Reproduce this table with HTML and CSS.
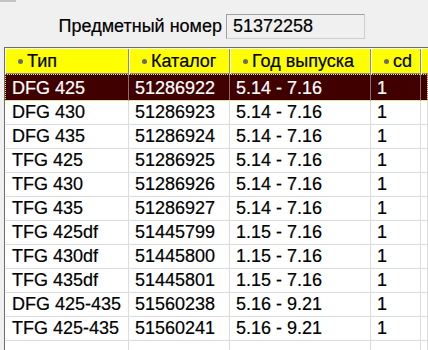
FILE: index.html
```html
<!DOCTYPE html>
<html lang="ru">
<head>
<meta charset="utf-8">
<title>Предметный номер</title>
<link rel="stylesheet" href="styles.css">
</head>
<body>
<div class="strip"><span class="strip-btn"></span></div>
<div class="search">
  <span class="search-label">Предметный номер</span>
  <div class="search-field">51372258</div>
</div>
<div class="grid">
  <div class="row hdr">
    <div class="hcell"><span class="dot"></span>Тип</div>
    <div class="hcell"><span class="dot"></span>Каталог</div>
    <div class="hcell"><span class="dot"></span>Год выпуска</div>
    <div class="hcell"><span class="dot"></span>cd</div>
    <div class="hcell"></div>
  </div>
  <div class="row data sel"><div class="cell">DFG 425</div><div class="cell">51286922</div><div class="cell">5.14 - 7.16</div><div class="cell">1</div><div class="cell"></div></div>
  <div class="row data"><div class="cell">DFG 430</div><div class="cell">51286923</div><div class="cell">5.14 - 7.16</div><div class="cell">1</div><div class="cell"></div></div>
  <div class="row data"><div class="cell">DFG 435</div><div class="cell">51286924</div><div class="cell">5.14 - 7.16</div><div class="cell">1</div><div class="cell"></div></div>
  <div class="row data"><div class="cell">TFG 425</div><div class="cell">51286925</div><div class="cell">5.14 - 7.16</div><div class="cell">1</div><div class="cell"></div></div>
  <div class="row data"><div class="cell">TFG 430</div><div class="cell">51286926</div><div class="cell">5.14 - 7.16</div><div class="cell">1</div><div class="cell"></div></div>
  <div class="row data"><div class="cell">TFG 435</div><div class="cell">51286927</div><div class="cell">5.14 - 7.16</div><div class="cell">1</div><div class="cell"></div></div>
  <div class="row data"><div class="cell">TFG 425df</div><div class="cell">51445799</div><div class="cell">1.15 - 7.16</div><div class="cell">1</div><div class="cell"></div></div>
  <div class="row data"><div class="cell">TFG 430df</div><div class="cell">51445800</div><div class="cell">1.15 - 7.16</div><div class="cell">1</div><div class="cell"></div></div>
  <div class="row data"><div class="cell">TFG 435df</div><div class="cell">51445801</div><div class="cell">1.15 - 7.16</div><div class="cell">1</div><div class="cell"></div></div>
  <div class="row data"><div class="cell">DFG 425-435</div><div class="cell">51560238</div><div class="cell">5.16 - 9.21</div><div class="cell">1</div><div class="cell"></div></div>
  <div class="row data"><div class="cell">TFG 425-435</div><div class="cell">51560241</div><div class="cell">5.16 - 9.21</div><div class="cell">1</div><div class="cell"></div></div>
  <div class="row data empty"><div class="cell"></div><div class="cell"></div><div class="cell"></div><div class="cell"></div><div class="cell"></div></div>
</div>
</body>
</html>
```
FILE: styles.css
```css
html, body {
  margin: 0;
  padding: 0;
}
body {
  width: 428px;
  height: 350px;
  overflow: hidden;
  display: flex;
  flex-direction: column;
  background: #f0f0f0;
  font-family: "Liberation Sans", Arial, sans-serif;
  font-size: 18px;
  color: #000;
  -webkit-text-stroke: 0.2px currentColor;
}
.strip {
  height: 3px;
  flex: none;
  display: flex;
}
.strip-btn {
  display: block;
  width: 16px;
  height: 2px;
  background: #c4c4c4;
}
.search {
  flex: none;
  display: flex;
  align-items: center;
  gap: 4px;
  margin-top: 10px;
}
.search-label {
  width: 222px;
  text-align: right;
  line-height: 25px;
  padding-top: 1px;
}
.search-field {
  box-sizing: border-box;
  width: 139px;
  height: 25px;
  padding-left: 6px;
  line-height: 23px;
  border: 1px solid;
  border-color: #a0a0a0 #cfcfcf #cfcfcf #a0a0a0;
  background: #f0f0f0;
}
.grid {
  flex: 1;
  min-height: 0;
  overflow: hidden;
  display: flex;
  flex-direction: column;
  margin-top: 8px;
  margin-left: 4px;
  border-left: 1px solid #6d6d6d;
  border-top: 1px solid #6d6d6d;
  background: #fff;
}
.row {
  flex: none;
  display: grid;
  grid-template-columns: 124px 101px 141px 50px 1fr;
}
.hcell {
  box-sizing: border-box;
  height: 26px;
  padding-left: 13px;
  background: #ffff00;
  box-shadow: inset 1px 1px 0 #ffffff, inset -1px -1px 0 #8c8c8c;
  line-height: 26px;
  white-space: nowrap;
  display: flex;
  align-items: center;
  gap: 4px;
}
.dot {
  width: 5px;
  height: 5px;
  border-radius: 50%;
  background: #6a6a6a;
  flex: none;
}
.row.data .cell:first-child {
  border-left: 1px solid transparent;
}
.cell {
  box-sizing: border-box;
  height: 24px;
  padding-left: 6px;
  line-height: 23px;
  border-right: 1px solid #dcdcdc;
  border-bottom: 1px solid #dcdcdc;
  white-space: nowrap;
  overflow: hidden;
}
.row.sel {
  background: #400000;
  color: #fff;
  outline: 1px dotted #e8e860;
  outline-offset: -1px;
}
.row.sel .cell {
  height: 27px;
  padding-top: 3px;
  border-right-color: #8a7070;
}
.row.empty {
  flex: 1;
}
.row.empty .cell {
  height: auto;
  border-bottom: none;
}
```
